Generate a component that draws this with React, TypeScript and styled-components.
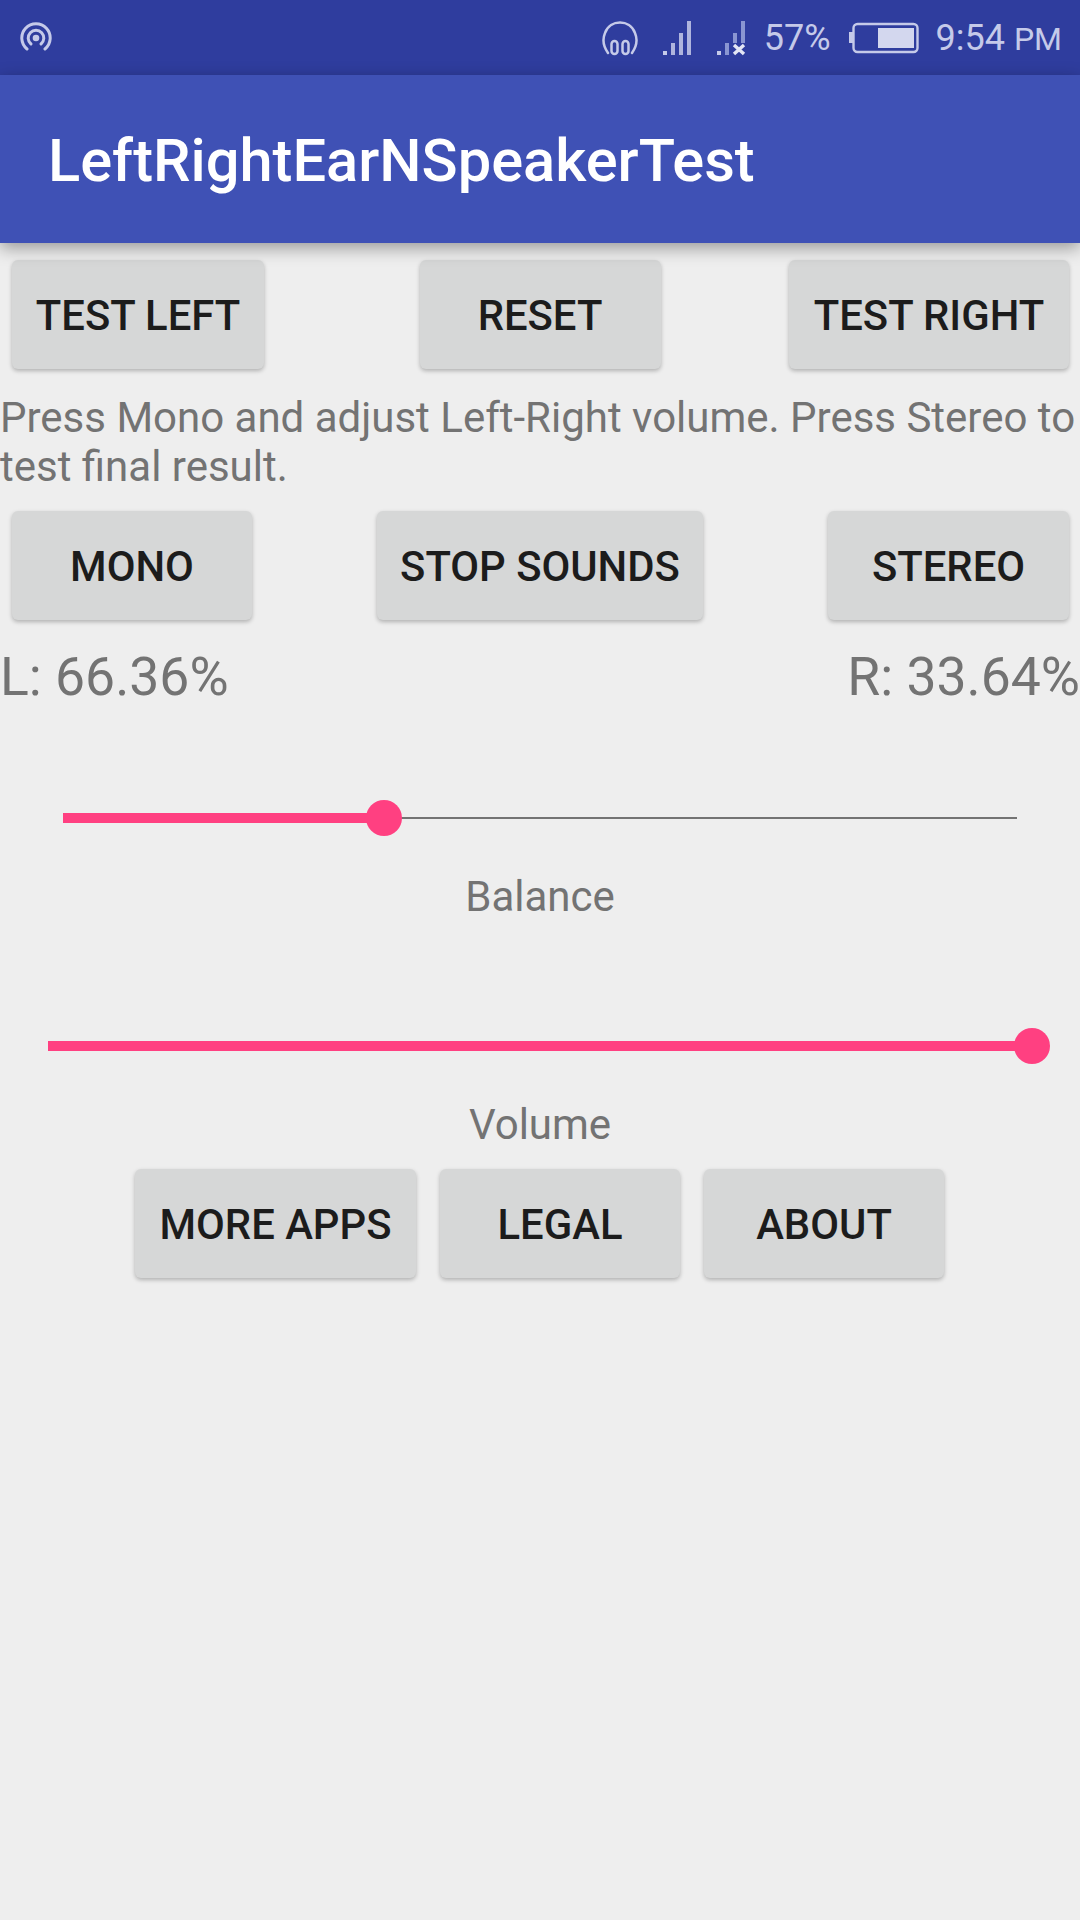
import React from "react";
import styled, { createGlobalStyle } from "styled-components";

const Global = createGlobalStyle`
  html, body { margin: 0; padding: 0; background: #eeeeee; }
  * { box-sizing: border-box; }
`;

const Page = styled.div`
  width: 1080px;
  height: 1920px;
  background: #eeeeee;
  font-family: Roboto, "Liberation Sans", sans-serif;
  display: flex;
  flex-direction: column;
  overflow: hidden;
`;

const StatusBar = styled.div`
  height: 75px;
  background: #2f3d9e;
  display: flex;
  align-items: center;
  padding: 0 18px 0 20px;
  color: #c5cae9;
`;

const StatusRight = styled.div`
  margin-left: auto;
  display: flex;
  align-items: center;
`;

const StatusText = styled.span<{ $ml: number }>`
  font-size: 36px;
  margin-left: ${(p) => p.$ml}px;
  line-height: 75px;
  padding-top: 2px;
  white-space: nowrap;
`;

const Small = styled.span`
  font-size: 32px;
`;

const AppBar = styled.div`
  height: 168px;
  background: #3f51b5;
  display: flex;
  align-items: center;
  padding: 3px 0 0 48px;
  box-shadow: 0 5px 16px rgba(0, 0, 0, 0.36);
  position: relative;
  z-index: 1;
`;

const Title = styled.h1`
  margin: 0;
  color: #fff;
  font-size: 59.6px;
  font-weight: 500;
`;

const ButtonGrid = styled.div<{ $top: number }>`
  display: grid;
  grid-template-columns: 1fr auto 1fr;
  padding: 0 12px;
  margin-top: ${(p) => p.$top}px;
  & > :first-child { justify-self: start; }
  & > :last-child { justify-self: end; margin-right: -1px; }
`;

const ButtonCluster = styled.div<{ $top: number }>`
  display: flex;
  justify-content: center;
  gap: 24px;
  padding-right: 1px;
  margin-top: ${(p) => p.$top}px;
`;

const Button = styled.div<{ $w: number }>`
  width: ${(p) => p.$w}px;
  height: 109px;
  padding-top: 2px;
  background: #d6d7d7;
  border-radius: 6px;
  box-shadow: 0 2px 4px rgba(0, 0, 0, 0.26);
  display: flex;
  align-items: center;
  justify-content: center;
  color: #1c1c1c;
  font-size: 41.8px;
  font-weight: 500;
  white-space: nowrap;
`;

const Paragraph = styled.p`
  margin: 24px 0 0;
  font-size: 42px;
  line-height: 49px;
  color: #737373;
`;

const Levels = styled.div`
  display: flex;
  justify-content: space-between;
  margin-top: 19px;
  font-size: 53.5px;
  line-height: 76px;
  color: #737373;
`;

const SliderBlock = styled.div<{ $top: number; $left: number; $right: number }>`
  margin: ${(p) => p.$top}px ${(p) => p.$right}px 0 ${(p) => p.$left}px;
  height: 36px;
  position: relative;
  display: flex;
  align-items: center;
`;

const Rail = styled.div`
  height: 2px;
  width: 100%;
  background: #737373;
`;

const Fill = styled.div`
  position: absolute;
  left: 0;
  top: 13px;
  height: 10px;
  background: #ff4081;
`;

const Thumb = styled.div`
  position: absolute;
  top: 0;
  width: 36px;
  height: 36px;
  margin-left: -18px;
  border-radius: 50%;
  background: #ff4081;
`;

const Caption = styled.div`
  margin-top: 33px;
  text-align: center;
  font-size: 42px;
  line-height: 56px;
  color: #737373;
`;

const Slider = ({ top, left, right, percent }: { top: number; left: number; right: number; percent: number }) => (
  <SliderBlock $top={top} $left={left} $right={right}>
    <Rail />
    <Fill style={{ width: `${percent}%` }} />
    <Thumb style={{ left: `${percent}%` }} />
  </SliderBlock>
);

const Icon = styled.svg<{ $ml: number }>`
  margin-left: ${(p) => p.$ml}px;
  display: block;
  flex: none;
`;

export default function App() {
  return (
    <Page>
      <Global />
      <StatusBar>
        <svg width="32" height="32" viewBox="0 0 32 32" fill="none" stroke="#c5cae9" strokeWidth="3" strokeLinecap="round">
          <path d="M7 27 A14.2 14.2 0 1 1 25 27" />
          <path d="M11 22 A7.8 7.8 0 1 1 21 22" />
          <circle cx="16" cy="16" r="3.3" fill="#c5cae9" stroke="none" />
        </svg>
        <StatusRight>
          <Icon $ml={0} width="36" height="36" viewBox="0 0 36 36" fill="none" stroke="#c5cae9" strokeWidth="2.5" strokeLinecap="round">
            <path d="M6 33 C1 26 0.5 19 3 13 C8 -1 28 -1 33 13 C35.5 19 35 26 30 33" />
            <rect x="9.5" y="21" width="6" height="13" rx="3" />
            <rect x="20.5" y="21" width="6" height="13" rx="3" />
          </Icon>
          <Icon $ml={25} width="28" height="36" viewBox="0 0 28 36" fill="#c5cae9">
            <rect x="0" y="31" width="4" height="4" />
            <rect x="8" y="23" width="4" height="12" opacity="0.85" />
            <rect x="16" y="13" width="4" height="22" opacity="0.85" />
            <rect x="24" y="1" width="4" height="34" opacity="0.85" />
          </Icon>
          <Icon $ml={26} width="29" height="36" viewBox="0 0 29 36" fill="#8a96d2">
            <rect x="0" y="31" width="4" height="4" fill="#c5cae9" />
            <rect x="8" y="23" width="4" height="12" />
            <rect x="16" y="13" width="4" height="10" />
            <rect x="24" y="1" width="4" height="22" />
            <path d="M17 25 L27 34 M27 25 L17 34" stroke="#e3e6f5" strokeWidth="3.4" />
          </Icon>
          <StatusText $ml={18}>57%</StatusText>
          <Icon $ml={18} width="70" height="32" viewBox="0 0 70 32" fill="none">
            <rect x="0" y="10" width="4" height="11" fill="#c5cae9" />
            <rect x="4.5" y="2" width="64" height="28" rx="4" stroke="#c5cae9" strokeWidth="2.4" />
            <rect x="29" y="6" width="36" height="20" fill="#d3d7ee" />
          </Icon>
          <StatusText $ml={17}>
            9:54 <Small>PM</Small>
          </StatusText>
        </StatusRight>
      </StatusBar>
      <AppBar>
        <Title>LeftRightEarNSpeakerTest</Title>
      </AppBar>
      <ButtonGrid $top={17}>
        <Button $w={252}>TEST LEFT</Button>
        <Button $w={241}>RESET</Button>
        <Button $w={280}>TEST RIGHT</Button>
      </ButtonGrid>
      <Paragraph>Press Mono and adjust Left-Right volume. Press Stereo to test final result.</Paragraph>
      <ButtonGrid $top={20}>
        <Button $w={240}>MONO</Button>
        <Button $w={326}>STOP SOUNDS</Button>
        <Button $w={241}>STEREO</Button>
      </ButtonGrid>
      <Levels>
        <span>L: 66.36%</span>
        <span>R: 33.64%</span>
      </Levels>
      <Slider top={85} left={63} right={63} percent={33.64} />
      <Caption>Balance</Caption>
      <Slider top={103} left={48} right={48} percent={100} />
      <Caption>Volume</Caption>
      <ButtonCluster $top={16}>
        <Button $w={281}>MORE APPS</Button>
        <Button $w={240}>LEGAL</Button>
        <Button $w={240}>ABOUT</Button>
      </ButtonCluster>
    </Page>
  );
}
